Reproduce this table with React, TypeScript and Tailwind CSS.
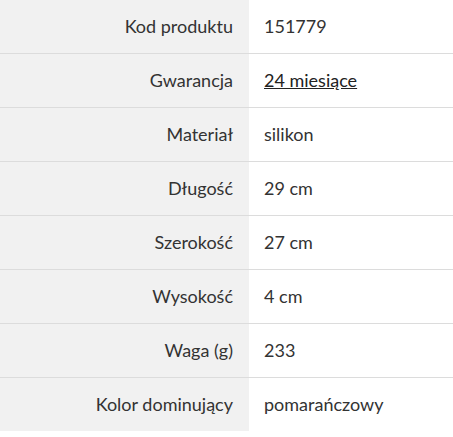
import React from 'react';

const rows: [string, string, boolean?][] = [
  ['Kod produktu', '151779'],
  ['Gwarancja', '24 miesiące', true],
  ['Materiał', 'silikon'],
  ['Długość', '29 cm'],
  ['Szerokość', '27 cm'],
  ['Wysokość', '4 cm'],
  ['Waga (g)', '233'],
  ['Kolor dominujący', 'pomarańczowy'],
];

const App: React.FC = () => {
  return (
    <div className="w-[453px] h-[437px] bg-white font-['Lato',sans-serif] text-[18px] text-[#333333]">
      {rows.map(([label, value, link], i) => (
        <div
          key={label}
          className={`flex ${i < rows.length - 1 ? 'h-[54px] border-b border-[#dcdcdc]' : 'h-[53px]'}`}
        >
          <div className="w-[249px] shrink-0 bg-[#f1f1f1] pr-4 flex items-center justify-end">{label}</div>
          <div className="flex-1 pl-[15px] flex items-center">
            {link ? <a href="#" className="underline text-[#222222]">{value}</a> : value}
          </div>
        </div>
      ))}
    </div>
  );
};

export default App;
